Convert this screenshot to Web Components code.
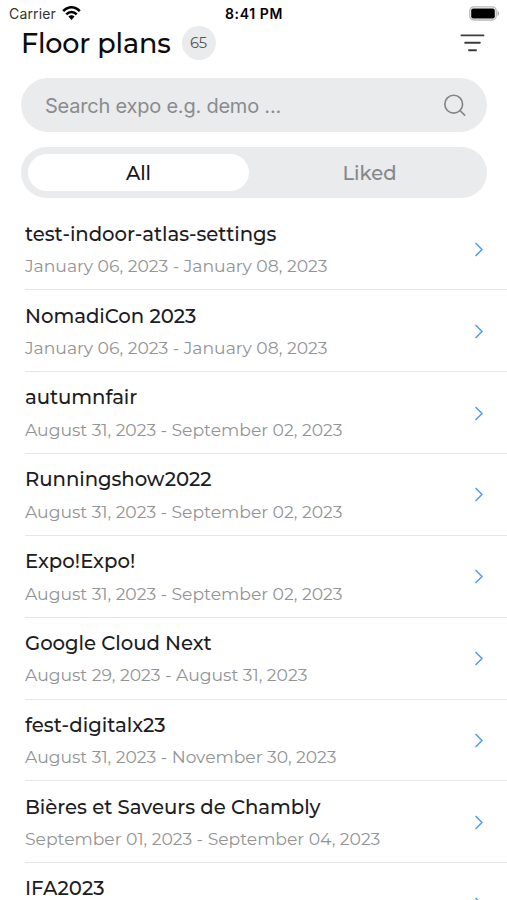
<!DOCTYPE html>
<html lang="en">
<head>
<meta charset="utf-8">
<title>Floor plans</title>
<style>
html, body { margin: 0; height: 100%; overflow: hidden; background: #fff; }
body { font-family: Montserrat, Inter, "Liberation Sans", sans-serif; color: #1c1c1e; }
</style>
</head>
<body>
<floor-app></floor-app>
<script>
function define(name, html, setup) {
  const template = document.createElement('template');
  template.innerHTML = html.trim();
  customElements.define(name, class extends HTMLElement {
    connectedCallback() {
      if (this.shadowRoot) return;
      this.attachShadow({ mode: 'open' }).append(template.content.cloneNode(true));
      if (setup) setup(this, this.shadowRoot);
    }
  });
}

/* Text tracked so that the line spans a given width. */
define('tracked-text', `<style>:host{display:block;white-space:pre;flex:none} span{display:inline-block;vertical-align:top}</style><span></span>`,
(el, root) => {
  const span = root.querySelector('span');
  const text = el.getAttribute('text');
  const width = Number(el.getAttribute('width'));
  span.textContent = text;
  const spacing = (width - span.getBoundingClientRect().width) / text.length;
  span.style.letterSpacing = spacing.toFixed(3) + 'px';
});

define('status-bar', `
<style>
:host{display:grid;grid-template-columns:1fr auto 1fr;align-items:center;height:27px;padding:0 7px 0 9px;box-sizing:border-box;font:400 14px/18px Inter,sans-serif;color:#111}
.left{display:flex;align-items:center;gap:6px;color:#333}
.left svg{margin-top:-1px}
.time{font-weight:600;color:#000;margin-left:-1px}
.battery{justify-self:end;display:block;margin-top:-1px}
svg{display:block}
</style>
<div class="left"><tracked-text text="Carrier" width="47"></tracked-text>
<svg width="19" height="15" viewBox="0 0 19 15"><g fill="none" stroke="#000" stroke-width="2.5"><path d="M1.2 5.2C6-.1 13-.1 17.8 5.2"/><path d="M4.3 8.4c3-3.2 7.4-3.2 10.4 0"/></g><path d="M6.4 10.6c1.8-1.7 4.4-1.7 6.2 0L9.5 14z"/></svg></div>
<tracked-text class="time" text="8:41 PM" width="58"></tracked-text>
<svg class="battery" width="31" height="15" viewBox="0 0 31 15"><rect x=".8" y=".8" width="26.4" height="13.2" rx="4" fill="#fff" stroke="#b8b8b8" stroke-width="1.3"/><rect x="2.2" y="2.4" width="23.6" height="10" rx="2"/><path d="M28.5 5c2.2.7 2.2 4.3 0 5z" fill="#b0b0b0"/></svg>`);

define('page-header', `
<style>
:host{display:flex;align-items:center;height:34px;padding:0 22px 0 21px;color:#0c0c0c}
h1{margin:0;font-size:27px;line-height:34px;font-weight:500}
.badge{display:grid;place-items:center;width:34px;height:34px;border-radius:50%;background:#e9ebec;margin:-2px 0 0 11px;font-size:14.8px;color:#555}
svg{margin-left:auto;margin-top:-3px}
</style>
<h1><tracked-text text="Floor plans" width="149.5"></tracked-text></h1>
<div class="badge"><tracked-text text="65" width="17"></tracked-text></div>
<svg width="25" height="20" viewBox="0 0 25 20" fill="none" stroke="#3c3c3c" stroke-width="1.9" stroke-linecap="round"><path d="M1.5 2.4h22M5.2 9.8h14.6M9 17.2h7"/></svg>`);

define('search-field', `
<style>
:host{display:flex;align-items:center;justify-content:space-between;height:54px;margin:17px 20px 0 21px;padding:0 21px 0 24px;box-sizing:border-box;border-radius:27px;background:#e9ebec;font:400 20px/26px Inter,sans-serif;color:#898b8c}
tracked-text{padding-top:2px}
svg{display:block}
</style>
<tracked-text text="Search expo e.g. demo ..." width="236"></tracked-text>
<svg width="23" height="23" viewBox="0 0 23 23" fill="none" stroke="#818385" stroke-width="1.6" stroke-linecap="round"><circle cx="10.7" cy="10.2" r="8.9"/><path d="m17 16.5 4.6 4.6"/></svg>`);

define('segment-tabs', `
<style>
:host{display:grid;grid-template-columns:221px 1fr;height:51px;margin:15px 20px 0 21px;padding:7px;box-sizing:border-box;border-radius:26px;background:#e9ebec;font-size:19.6px;line-height:25px}
div{display:grid;place-items:center;border-radius:19px;color:#858789;padding-top:2px;box-sizing:border-box}
.on{background:#fff;color:#171717;font-weight:500}
.off{padding-left:10px;font-weight:500}
</style>
<div class="on"><tracked-text text="All" width="25"></tracked-text></div>
<div class="off"><tracked-text text="Liked" width="54"></tracked-text></div>`);

define('expo-row', `
<style>
:host{display:flex;align-items:center;justify-content:space-between;height:81.83px;margin-left:25px;padding-right:23.5px;box-sizing:border-box;border-bottom:1px solid #e6e7e8}
.text{display:flex;flex-direction:column;gap:7.6px;padding-top:2px}
.name{font-size:19.7px;line-height:25px;font-weight:500;color:#1d1d1f;height:25px}
.dates{font-size:17.2px;line-height:24px;color:#929495;height:24px}
svg{display:block;margin-top:1px}
</style>
<div class="text"><div class="name"></div><div class="dates"></div></div>
<svg width="10" height="15" viewBox="0 0 10 15" fill="none" stroke="#5aa0ea" stroke-width="1.7" stroke-linecap="round" stroke-linejoin="round"><path d="m2 1.5 6 6-6 6"/></svg>`,
(el, root) => {
  for (const key of ['name', 'dates']) {
    if (!el.hasAttribute(key)) continue;
    const t = document.createElement('tracked-text');
    t.setAttribute('text', el.getAttribute(key));
    t.setAttribute('width', el.getAttribute(key + '-width'));
    root.querySelector('.' + key).append(t);
  }
});

define('floor-app', `
<style>:host{display:block;height:900px;overflow:hidden} main{margin-top:10.6px}</style>
<status-bar></status-bar><page-header></page-header><search-field></search-field><segment-tabs></segment-tabs>
<main>
<expo-row name="test-indoor-atlas-settings" name-width="251.4" dates="January 06, 2023 - January 08, 2023" dates-width="302.5"></expo-row>
<expo-row name="NomadiCon 2023" name-width="171.3" dates="January 06, 2023 - January 08, 2023" dates-width="302.5"></expo-row>
<expo-row name="autumnfair" name-width="112.3" dates="August 31, 2023 - September 02, 2023" dates-width="317.4"></expo-row>
<expo-row name="Runningshow2022" name-width="186.5" dates="August 31, 2023 - September 02, 2023" dates-width="317.4"></expo-row>
<expo-row name="Expo!Expo!" name-width="110.3" dates="August 31, 2023 - September 02, 2023" dates-width="317.4"></expo-row>
<expo-row name="Google Cloud Next" name-width="186.6" dates="August 29, 2023 - August 31, 2023" dates-width="282.4"></expo-row>
<expo-row name="fest-digitalx23" name-width="140.6" dates="August 31, 2023 - November 30, 2023" dates-width="311.5"></expo-row>
<expo-row name="Bières et Saveurs de Chambly" name-width="295.5" dates="September 01, 2023 - September 04, 2023" dates-width="355.3"></expo-row>
<expo-row name="IFA2023" name-width="79.5"></expo-row>
</main>`);
</script>
</body>
</html>
